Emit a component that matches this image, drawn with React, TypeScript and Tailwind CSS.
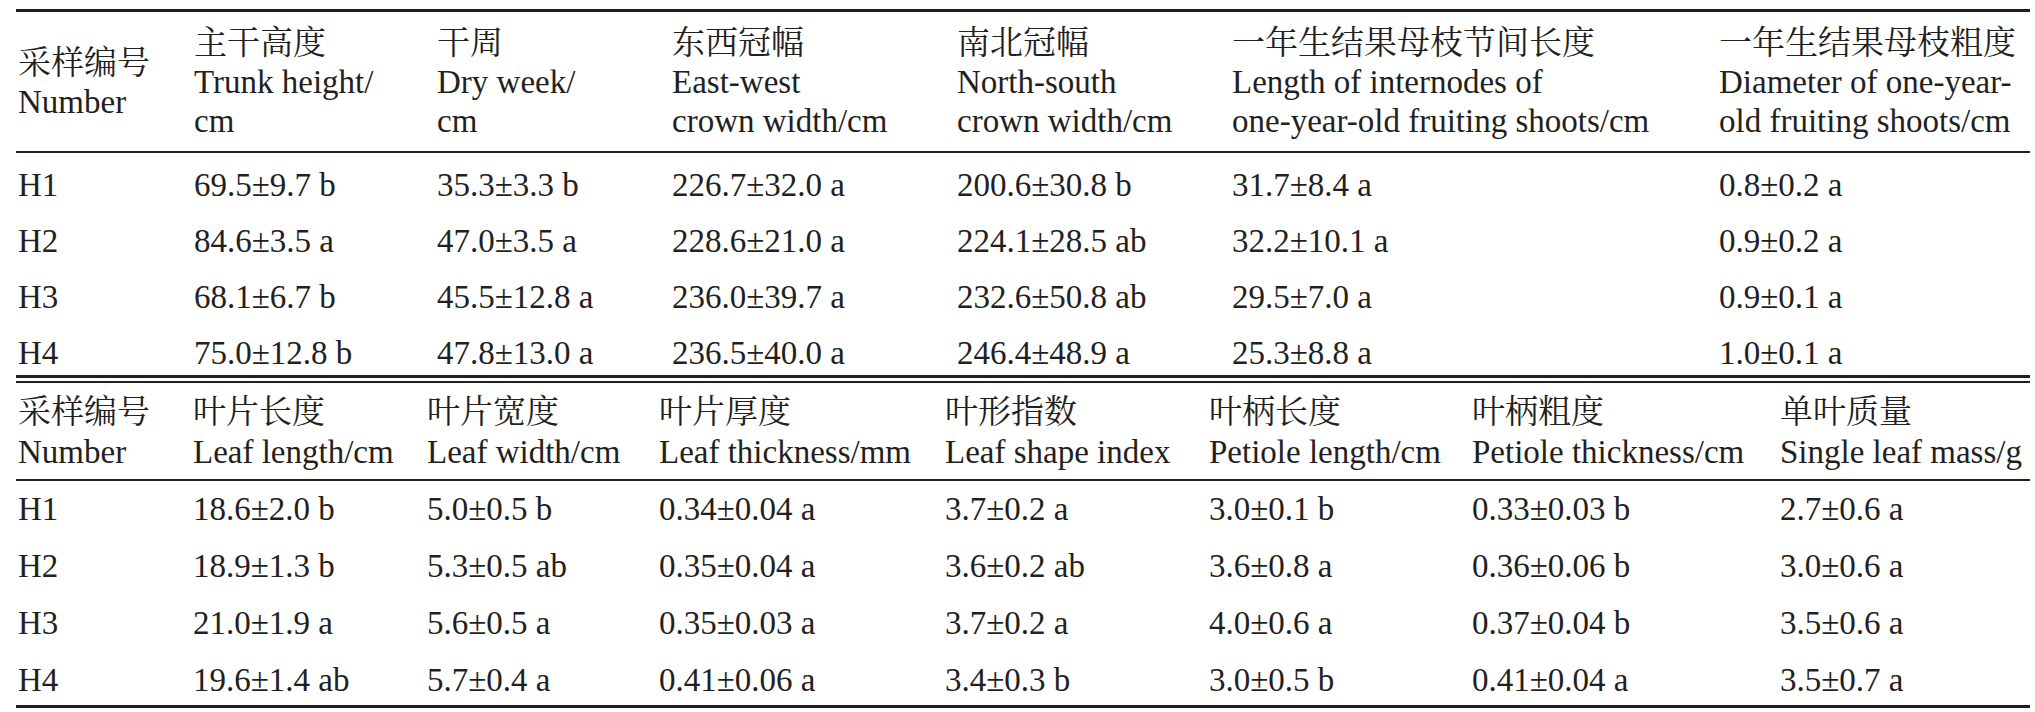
import React from "react";

const t1Cols = "grid grid-cols-[176px_243px_235px_285px_275px_487px_1fr] pl-[2px]";
const t2Cols = "grid grid-cols-[175px_234px_232px_286px_264px_263px_308px_1fr] pl-[2px]";

const t1Head: string[][] = [
  ["采样编号", "Number"],
  ["主干高度", "Trunk height/", "cm"],
  ["干周", "Dry week/", "cm"],
  ["东西冠幅", "East-west", "crown width/cm"],
  ["南北冠幅", "North-south", "crown width/cm"],
  ["一年生结果母枝节间长度", "Length of internodes of", "one-year-old fruiting shoots/cm"],
  ["一年生结果母枝粗度", "Diameter of one-year-", "old fruiting shoots/cm"],
];

const t1Rows: string[][] = [
  ["H1", "69.5±9.7 b", "35.3±3.3 b", "226.7±32.0 a", "200.6±30.8 b", "31.7±8.4 a", "0.8±0.2 a"],
  ["H2", "84.6±3.5 a", "47.0±3.5 a", "228.6±21.0 a", "224.1±28.5 ab", "32.2±10.1 a", "0.9±0.2 a"],
  ["H3", "68.1±6.7 b", "45.5±12.8 a", "236.0±39.7 a", "232.6±50.8 ab", "29.5±7.0 a", "0.9±0.1 a"],
  ["H4", "75.0±12.8 b", "47.8±13.0 a", "236.5±40.0 a", "246.4±48.9 a", "25.3±8.8 a", "1.0±0.1 a"],
];

const t2Head: string[][] = [
  ["采样编号", "Number"],
  ["叶片长度", "Leaf length/cm"],
  ["叶片宽度", "Leaf width/cm"],
  ["叶片厚度", "Leaf thickness/mm"],
  ["叶形指数", "Leaf shape index"],
  ["叶柄长度", "Petiole length/cm"],
  ["叶柄粗度", "Petiole thickness/cm"],
  ["单叶质量", "Single leaf mass/g"],
];

const t2Rows: string[][] = [
  ["H1", "18.6±2.0 b", "5.0±0.5 b", "0.34±0.04 a", "3.7±0.2 a", "3.0±0.1 b", "0.33±0.03 b", "2.7±0.6 a"],
  ["H2", "18.9±1.3 b", "5.3±0.5 ab", "0.35±0.04 a", "3.6±0.2 ab", "3.6±0.8 a", "0.36±0.06 b", "3.0±0.6 a"],
  ["H3", "21.0±1.9 a", "5.6±0.5 a", "0.35±0.03 a", "3.7±0.2 a", "4.0±0.6 a", "0.37±0.04 b", "3.5±0.6 a"],
  ["H4", "19.6±1.4 ab", "5.7±0.4 a", "0.41±0.06 a", "3.4±0.3 b", "3.0±0.5 b", "0.41±0.04 a", "3.5±0.7 a"],
];

export default function App() {
  return (
    <div className="w-[2035px] h-[712px] bg-white text-[#231f20] font-['Liberation_Serif','Noto_Serif_CJK_SC','Noto_Sans_CJK_SC',serif] text-[33px] overflow-hidden">
      <div className="ml-[16px] mr-[5px] pt-[9px]">
        {/* Table 1 */}
        <div className="border-t-[3px] border-b-[3px] border-[#231f20]">
          <div className={`${t1Cols} pt-[12px] pb-[10px] leading-[39px] border-b-2 border-[#231f20]`}>
            {t1Head.map((lines, i) => (
              <div key={i} className={`flex flex-col whitespace-nowrap ${i === 0 ? "justify-center" : ""}`}>
                {lines.map((l, j) => (
                  <span key={j}>{l}</span>
                ))}
              </div>
            ))}
          </div>
          {t1Rows.map((row, r) => (
            <div
              key={r}
              className={`${t1Cols} leading-[40px] pt-[12px] ${r === t1Rows.length - 1 ? "pb-[2px]" : "pb-[4px]"}`}
            >
              {row.map((c, i) => (
                <div key={i} className="whitespace-nowrap">{c}</div>
              ))}
            </div>
          ))}
        </div>
        {/* Table 2 */}
        <div className="mt-[3px] border-t-2 border-b-[3px] border-[#231f20]">
          <div className={`${t2Cols} pt-[9px] pb-[7px] leading-[40px] border-b-2 border-[#231f20]`}>
            {t2Head.map((lines, i) => (
              <div key={i} className="flex flex-col whitespace-nowrap">
                {lines.map((l, j) => (
                  <span key={j}>{l}</span>
                ))}
              </div>
            ))}
          </div>
          {t2Rows.map((row, r) => (
            <div
              key={r}
              className={`${t2Cols} leading-[40px] pt-[8px] ${r === t2Rows.length - 1 ? "pb-[5px]" : "pb-[9px]"}`}
            >
              {row.map((c, i) => (
                <div key={i} className="whitespace-nowrap">{c}</div>
              ))}
            </div>
          ))}
        </div>
      </div>
    </div>
  );
}
